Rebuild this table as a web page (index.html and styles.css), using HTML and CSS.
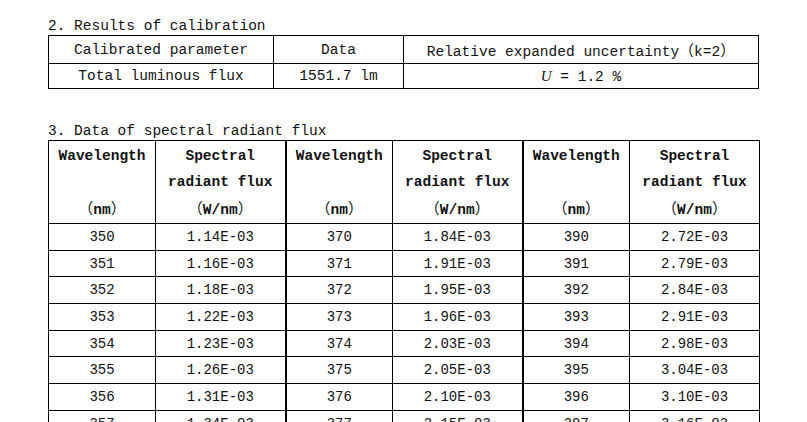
FILE: index.html
```html
<!DOCTYPE html>
<html>
<head>
    <meta charset="utf-8" />
    <title>Calibration report</title>
    <link rel="stylesheet" href="styles.css">
</head>
<body>
    <div class="report">
        <div class="section-title">2. Results of calibration</div>
        <table class="result-table">
            <colgroup>
                <col class="c-param">
                <col class="c-data">
                <col class="c-unc">
            </colgroup>
            <tr class="row-head">
                <td>Calibrated parameter</td>
                <td>Data</td>
                <td>Relative expanded uncertainty<span class="fw">（</span>k=2<span class="fw">）</span></td>
            </tr>
            <tr class="row-val">
                <td>Total luminous flux</td>
                <td>1551.7 lm</td>
                <td><i class="sym">U</i> = 1.2 %</td>
            </tr>
        </table>

        <div class="section-title second">3. Data of spectral radiant flux</div>
        <table class="flux-table">
            <colgroup>
                <col class="c-wl"><col class="c-flux">
                <col class="c-wl"><col class="c-flux">
                <col class="c-wl"><col class="c-flux">
            </colgroup>
            <tr class="head">
                <th>Wavelength<br>&nbsp;<br><span class="fw">（</span>nm<span class="fw">）</span></th>
                <th>Spectral<br>radiant flux<br><span class="fw">（</span>W/nm<span class="fw">）</span></th>
                <th class="split">Wavelength<br>&nbsp;<br><span class="fw">（</span>nm<span class="fw">）</span></th>
                <th>Spectral<br>radiant flux<br><span class="fw">（</span>W/nm<span class="fw">）</span></th>
                <th class="split">Wavelength<br>&nbsp;<br><span class="fw">（</span>nm<span class="fw">）</span></th>
                <th>Spectral<br>radiant flux<br><span class="fw">（</span>W/nm<span class="fw">）</span></th>
            </tr>
            <tr><td>350</td><td>1.14E-03</td><td class="split">370</td><td>1.84E-03</td><td class="split">390</td><td>2.72E-03</td></tr>
            <tr><td>351</td><td>1.16E-03</td><td class="split">371</td><td>1.91E-03</td><td class="split">391</td><td>2.79E-03</td></tr>
            <tr><td>352</td><td>1.18E-03</td><td class="split">372</td><td>1.95E-03</td><td class="split">392</td><td>2.84E-03</td></tr>
            <tr><td>353</td><td>1.22E-03</td><td class="split">373</td><td>1.96E-03</td><td class="split">393</td><td>2.91E-03</td></tr>
            <tr><td>354</td><td>1.23E-03</td><td class="split">374</td><td>2.03E-03</td><td class="split">394</td><td>2.98E-03</td></tr>
            <tr><td>355</td><td>1.26E-03</td><td class="split">375</td><td>2.05E-03</td><td class="split">395</td><td>3.04E-03</td></tr>
            <tr><td>356</td><td>1.31E-03</td><td class="split">376</td><td>2.10E-03</td><td class="split">396</td><td>3.10E-03</td></tr>
            <tr><td>357</td><td>1.34E-03</td><td class="split">377</td><td>2.15E-03</td><td class="split">397</td><td>3.16E-03</td></tr>
        </table>
    </div>
</body>
</html>
```

FILE: styles.css
```css
body{
    margin:0;
    background:#fff;
    color:#111;
    font-family:"Liberation Mono","Noto Sans CJK SC",monospace;
    font-size:14.5px;
}
.report{
    padding:16px 0 0 48px;
    width:710px;
}
.section-title{
    line-height:20px;
    height:20px;
    margin-bottom:-1px;
}
.section-title.second{
    margin-top:32px;
}
.fw{
    font-family:"Noto Sans CJK SC",sans-serif;
    font-weight:normal;
    font-size:15px;
}
.sym{
    font-family:"Liberation Serif",serif;
    font-size:15px;
}

/* 表1 */
.result-table{
    width:710px;
    border-collapse:collapse;
    table-layout:fixed;
}
.result-table td{
    border:1px solid #000;
    text-align:center;
    padding:0;
    white-space:nowrap;
}
.c-param{width:225px;}
.c-data{width:130px;}
.c-unc{width:355px;}
.row-head{height:28px;}
.row-val{height:25px;}

/* 表2 */
.flux-table{
    width:710px;
    border-collapse:collapse;
    table-layout:fixed;
}
.c-wl{width:107px;}
.c-flux{width:130px;}
.flux-table th,
.flux-table td{
    border:1px solid #000;
    text-align:center;
    padding:0;
    white-space:nowrap;
}
.flux-table th{
    font-weight:bold;
    line-height:26px;
    height:78px;
    padding-top:2px;
    vertical-align:top;
}
.flux-table td{
    height:25.7px;
    font-size:14px;
}
.flux-table .split{
    border-left:2px solid #000;
}
```
